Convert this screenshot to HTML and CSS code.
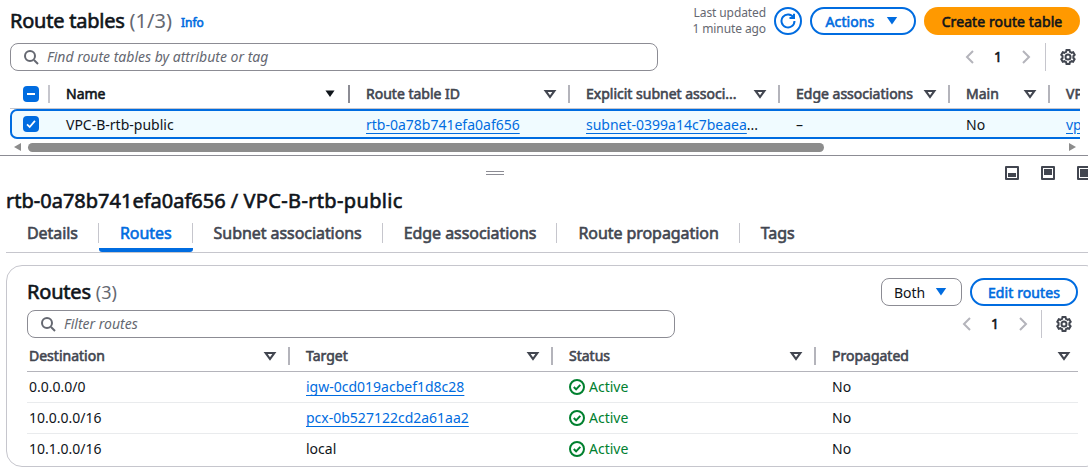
FILE: index.html

```html
<!DOCTYPE html>
<html lang="en">
<head>
  <meta charset="UTF-8" />
  <title>Route tables</title>
  <link rel="stylesheet" href="styles.css">
</head>
<body>
  <svg class="defs" width="0" height="0">
    <symbol id="search" viewBox="0 0 16 16"><circle cx="7" cy="7" r="5" /><path d="m11 11 4 4" /></symbol>
    <symbol id="sort" viewBox="0 0 16 16"><path d="M3 4.500h10L8 11.500z" /></symbol>
    <symbol id="caret" viewBox="0 0 16 16"><path class="solid" d="M2.800 4h10.400L8 11.500z" /></symbol>
    <symbol id="left" viewBox="0 0 16 16"><path d="m11 2-6 6 6 6" /></symbol>
    <symbol id="right" viewBox="0 0 16 16"><path d="m5 2 6 6-6 6" /></symbol>
    <symbol id="gear" viewBox="0 0 16 16"><path d="M13.500 8c0-.3 0-.6-.1-.9l1.300-1.200-1.500-2.600-1.700.5c-.4-.4-1-.7-1.500-.9L9.500 1h-3l-.4 1.900c-.6.2-1.100.5-1.600.9l-1.700-.5-1.500 2.600 1.300 1.200c-.1.3-.1.6-.1.9s0 .6.1.9l-1.300 1.200 1.500 2.600 1.700-.5c.4.4 1 .7 1.600.9l.4 1.900h3l.4-1.900c.6-.2 1.100-.5 1.500-.9l1.700.5 1.500-2.600-1.300-1.200c.1-.3.1-.6.1-.9z" /><circle cx="8" cy="8" r="2.500" /></symbol>
    <symbol id="ok" viewBox="0 0 16 16"><circle cx="8" cy="8" r="7" /><path d="m4.800 8 2.300 2.400 4.200-4.600" /></symbol>
  </svg>

  <section class="top">
    <header class="top-head">
      <h1>Route tables <span class="count">(1/3)</span></h1>
      <a class="info">Info</a>
      <div class="updated">Last updated<br />1 minute ago</div>
      <button class="refresh">
        <svg viewBox="0 0 16 16"><path d="M13.500 4.500A6.500 6.500 0 1 0 14.500 8" /><path d="M9.500 5h4.500V.8" /></svg>
      </button>
      <button class="btn actions">Actions <svg class="icon"><use href="#caret" /></svg></button>
      <button class="btn primary">Create route table</button>
    </header>

    <div class="filter-row">
      <div class="search top-search">
        <svg class="icon"><use href="#search" /></svg>
        <span>Find route tables by attribute or tag</span>
      </div>
      <div class="pager">
        <svg class="icon"><use href="#left" /></svg>
        <b>1</b>
        <svg class="icon"><use href="#right" /></svg>
        <span class="pager-sep"></span>
        <svg class="icon gear"><use href="#gear" /></svg>
      </div>
    </div>

    <div class="table-clip">
      <div class="rt-grid rt-head">
        <div class="cell check-cell"><span class="box minus"><i></i></span></div>
        <div class="cell th dark">Name <svg class="icon"><use href="#caret" /></svg></div>
        <div class="cell th">Route table ID <svg class="icon"><use href="#sort" /></svg></div>
        <div class="cell th">Explicit subnet associ... <svg class="icon"><use href="#sort" /></svg></div>
        <div class="cell th">Edge associations <svg class="icon"><use href="#sort" /></svg></div>
        <div class="cell th">Main <svg class="icon"><use href="#sort" /></svg></div>
        <div class="cell th last">VPC</div>
      </div>
      <div class="rt-grid rt-row">
        <div class="cell check-cell"><span class="box">
          <svg viewBox="0 0 16 16"><path d="m3.500 8.500 3 3 6-7" /></svg>
        </span></div>
        <div class="cell">VPC-B-rtb-public</div>
        <div class="cell"><a>rtb-0a78b741efa0af656</a></div>
        <div class="cell"><a>subnet-0399a14c7beaea</a>...</div>
        <div class="cell">–</div>
        <div class="cell">No</div>
        <div class="cell"><a>vpc-0b1</a></div>
      </div>
    </div>

    <div class="hscroll">
      <span class="arrow back"></span>
      <span class="thumb"></span>
      <span class="arrow fwd"></span>
    </div>
  </section>

  <section class="split">
    <div class="split-bar">
      <span class="handle"></span>
      <div class="modes">
        <span class="mode bottom"></span>
        <span class="mode side"></span>
        <span class="mode full"></span>
      </div>
    </div>

    <h2>rtb-0a78b741efa0af656 / <span class="rtb-name">VPC-B-rtb-public</span></h2>

    <nav class="tabs">
      <a class="tab">Details</a>
      <a class="tab active">Routes</a>
      <a class="tab">Subnet associations</a>
      <a class="tab">Edge associations</a>
      <a class="tab">Route propagation</a>
      <a class="tab last">Tags</a>
    </nav>

    <div class="panel">
      <div class="panel-head">
        <h3>Routes <span class="count">(3)</span></h3>
        <button class="select">Both <svg class="icon"><use href="#caret" /></svg></button>
        <button class="btn edit">Edit routes</button>
      </div>
      <div class="filter-row panel-filter">
        <div class="search routes-search">
          <svg class="icon"><use href="#search" /></svg>
          <span>Filter routes</span>
        </div>
        <div class="pager">
          <svg class="icon"><use href="#left" /></svg>
          <b>1</b>
          <svg class="icon"><use href="#right" /></svg>
          <span class="pager-sep"></span>
          <svg class="icon gear"><use href="#gear" /></svg>
        </div>
      </div>

      <div class="r-grid r-head">
        <div class="cell th">Destination <svg class="icon"><use href="#sort" /></svg></div>
        <div class="cell th">Target <svg class="icon"><use href="#sort" /></svg></div>
        <div class="cell th">Status <svg class="icon"><use href="#sort" /></svg></div>
        <div class="cell th last">Propagated <svg class="icon"><use href="#sort" /></svg></div>
      </div>
      <div class="r-grid r-row">
        <div class="cell">0.0.0.0/0</div>
        <div class="cell"><a>igw-0cd019acbef1d8c28</a></div>
        <div class="cell status"><svg class="icon"><use href="#ok" /></svg>Active</div>
        <div class="cell">No</div>
      </div>
      <div class="r-grid r-row">
        <div class="cell">10.0.0.0/16</div>
        <div class="cell"><a>pcx-0b527122cd2a61aa2</a></div>
        <div class="cell status"><svg class="icon"><use href="#ok" /></svg>Active</div>
        <div class="cell">No</div>
      </div>
      <div class="r-grid r-row">
        <div class="cell">10.1.0.0/16</div>
        <div class="cell">local</div>
        <div class="cell status"><svg class="icon"><use href="#ok" /></svg>Active</div>
        <div class="cell">No</div>
      </div>
    </div>
  </section>
</body>
</html>
```

FILE: styles.css

```css
html, body { margin: 0; height: 467px; overflow: hidden; background: #fff; }
body { font-family: "Noto Sans", sans-serif; font-size: 14px; line-height: 20px; color: #0f141a; }
h1, h2, h3 { margin: 0; font-weight: 400; }
a { color: #006ce0; text-decoration: underline; text-underline-offset: 3px; text-decoration-thickness: 1px; }
button { font-family: inherit; cursor: pointer; padding: 0; }
.defs { position: absolute; }
symbol path, symbol circle { fill: none; stroke: currentColor; stroke-width: 2; }
#sort path { stroke-width: 2.4; }

/* headings use the regular cut thickened with a stroke, the bold cut runs too wide */
h1, h2, h3, .info, .btn, .th, .tab, .pager b { -webkit-text-stroke: 0.6px currentColor; }

.icon { width: 16px; height: 16px; flex: none; }
.count { color: #656871; -webkit-text-stroke: 0; letter-spacing: 0; }

/* top part */
.top { height: 155px; border-bottom: 1px solid #8c8c94; }
.top-head { display: flex; align-items: center; height: 28px; padding: 7px 8px 0 10px; }
.top-head h1 { font-size: 20px; line-height: 28px; letter-spacing: -0.23px; }
.info { margin-left: 9px; margin-top: 3px; font-size: 12px; text-decoration: none; }
.updated { margin-left: auto; font-size: 12px; line-height: 16px; letter-spacing: -0.1px; color: #656871; text-align: right; }
.refresh { width: 28px; height: 28px; margin-left: 8px; border: 2px solid #006ce0; border-radius: 50%; background: #fff; display: flex; align-items: center; justify-content: center; }
.refresh svg { width: 16px; height: 16px; fill: none; stroke: #006ce0; stroke-width: 2; }
.btn { height: 28px; border-radius: 20px; font-size: 14px; letter-spacing: 0.1px; box-sizing: border-box; }
.actions { width: 106px; margin-left: 8px; border: 2px solid #006ce0; background: #fff; color: #006ce0; display: flex; align-items: center; justify-content: center; gap: 10px; }
.primary { width: 156px; margin-left: 8px; border: 0; background: #ff9900; color: #0f141a; }
.solid { fill: currentColor; stroke: none; }

.filter-row { display: flex; align-items: center; margin-top: 8px; padding-left: 10px; }
.search { display: flex; align-items: center; gap: 8px; box-sizing: border-box; height: 28px; border: 1px solid #8c8c94; border-radius: 8px; padding-left: 12px; color: #656871; font-style: italic; }
.top-search { width: 648px; }
.pager { display: flex; align-items: center; height: 28px; color: #b4b4bb; }
.filter-row > .pager { margin-left: 304px; }
.pager b { width: 28px; margin: 0 6px; text-align: center; color: #0f141a; font-weight: 400; }
.pager-sep { width: 1px; height: 28px; margin: 0 14px 0 11px; background: #c6c6cd; }
.gear { color: #424650; }

.table-clip { width: 1070px; margin-left: 10px; margin-top: 9px; overflow: hidden; }
.rt-grid { display: grid; grid-template-columns: 40px 300px 220px 210px 170px 100px 80px; width: 1120px; align-items: center; }
.rt-head { height: 28px; border-bottom: 1px solid #c6c6cd; }
.rt-row { height: 30px; background: #f0fbff; border-radius: 7px 0 0 7px; box-shadow: inset 0 0 0 2px #006ce0; }
.rt-row .cell { padding-top: 1px; }
.cell { display: flex; align-items: center; padding-left: 16px; white-space: nowrap; overflow: hidden; box-sizing: border-box; }
.th { height: 18px; padding-right: 11px; border-right: 2px solid #b4b4bb; justify-content: space-between; color: #424650; }
.th .icon { color: #424650; width: 14px; height: 14px; }
.th.dark { color: #0f141a; border-right-color: #8c8c94; }
.th.dark .icon { color: #0f141a; }
.th.last { border-right: 0; }
.check-cell { padding-left: 13px; height: 18px; padding-right: 9px; border-right: 2px solid #c6c6cd; }
.rt-row .check-cell { border-right: 0; padding-top: 0; }
.box { display: flex; align-items: center; justify-content: center; width: 16px; height: 16px; border-radius: 4px; background: #006ce0; }
.box i { width: 8px; height: 2px; background: #fff; }
.box svg { width: 14px; height: 14px; fill: none; stroke: #fff; stroke-width: 2; }

.hscroll { display: flex; align-items: center; height: 10px; margin-top: 3px; padding: 0 12px 0 14px; }
.thumb { width: 796px; height: 9px; margin-left: 7px; border-radius: 5px; background: #8c8c8c; }
.arrow { width: 0; height: 0; border: 4px solid transparent; }
.back { border-right: 7px solid #8c8c8c; border-left: 0; }
.fwd { border-left: 7px solid #8c8c8c; border-right: 0; margin-left: auto; }

/* split panel */
.split-bar { display: flex; align-items: flex-start; box-sizing: border-box; height: 33px; padding: 10px 0 0 486px; }
.handle { flex: none; width: 18px; height: 2px; margin-top: 5px; border-top: 1px solid #8c8c94; border-bottom: 1px solid #8c8c94; }
.modes { display: flex; gap: 22px; margin-left: 501px; flex: none; }
.mode { flex: none; box-sizing: border-box; width: 14px; height: 14px; padding: 1px; border: 2px solid #424650; border-radius: 1px; display: flex; align-items: flex-end; }
.mode::before { content: ""; width: 100%; background: #424650; }
.mode.bottom::before { height: 4px; }
.mode.side::before { height: 6px; margin-bottom: 2px; }
.mode.full::before { height: 8px; }
.split h2 { padding-left: 6px; font-size: 20px; line-height: 24px; }
.rtb-name { letter-spacing: 0.35px; }

.tabs { display: flex; height: 39px; margin-left: 6px; border-bottom: 1px solid #c6c6cd; }
.tab { box-sizing: border-box; height: 39px; padding: 10px 21px 0; border-bottom: 4px solid transparent; border-radius: 0 0 3px 3px; font-size: 16px; line-height: 20px; letter-spacing: -0.06px; color: #424650; text-decoration: none; background: linear-gradient(#c6c6cd, #c6c6cd) right 0 top 10px / 1px 20px no-repeat; }
.tab.last { background: none; }
.tab.active { color: #006ce0; border-bottom-color: #006ce0; }

.panel { margin: 12px 0 0 6px; width: 1096px; height: 202px; box-sizing: border-box; border: 1px solid #c6c6cd; border-radius: 16px; padding: 12px 0 0 20px; }
.panel-head { display: flex; align-items: center; height: 28px; width: 1051px; }
.panel-head h3 { font-size: 20px; line-height: 24px; letter-spacing: -0.2px; margin-right: auto; }
.panel-head .count { font-size: 18px; }
.select { display: flex; align-items: center; justify-content: space-between; box-sizing: border-box; width: 81px; height: 28px; padding: 0 12px; border: 1px solid #8c8c94; border-radius: 8px; background: #fff; font-size: 14px; color: #0f141a; }
.select .icon { color: #006ce0; }
.edit { width: 108px; margin-left: 8px; border: 2px solid #006ce0; background: #fff; color: #006ce0; }
.panel-filter { margin-top: 4px; padding-left: 0; }
.routes-search { width: 648px; }
.panel-filter > .pager { margin-left: 284px; }
.panel-filter .pager-sep { margin-left: 10px; }

.r-grid { display: grid; grid-template-columns: 263px 263px 263px 262px; width: 1051px; align-items: center; }
.r-head { height: 30px; margin-top: 3px; border-bottom: 1px solid #b4b4bb; }
.r-head .th:first-child, .r-row .cell:first-child { padding-left: 2px; }
.r-head .th.last { padding-right: 7px; }
.r-row { height: 30px; border-bottom: 1px solid #e9ebed; }
.r-row:last-child { border-bottom: 0; }
.status { gap: 4px; color: #00802f; }
```
